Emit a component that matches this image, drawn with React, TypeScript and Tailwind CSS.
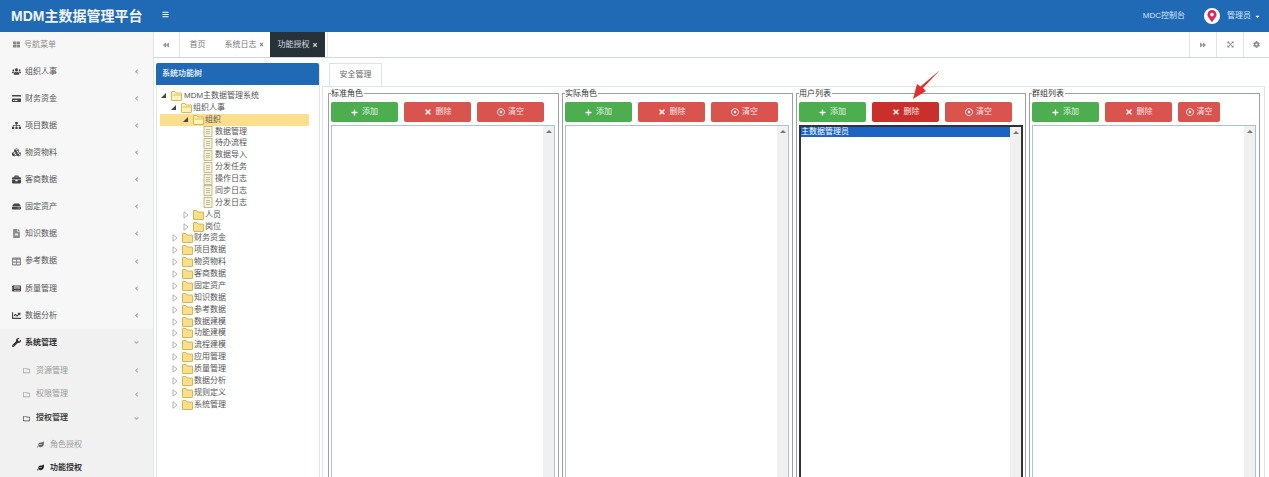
import { ReactNode } from "react"
import {
  FaAngleDown, FaAngleLeft, FaBars, FaBriefcase, FaCaretDown, FaCog, FaCreditCard, FaCubes,
  FaExpandArrowsAlt, FaFileAlt, FaForward, FaBackward, FaHdd, FaLeaf, FaChartLine,
  FaMapMarkerAlt, FaNewspaper, FaPlus, FaSitemap, FaTable, FaThLarge, FaTimes, FaUsers, FaWrench,
  FaRegFolder, FaRegDotCircle,
} from "react-icons/fa"

const sideItems: { label: string; icon: ReactNode; h: string }[] = [
  { label: "组织人事", icon: <FaUsers />, h: "h-[27px]" },
  { label: "财务资金", icon: <FaCreditCard />, h: "h-[27px]" },
  { label: "项目数据", icon: <FaSitemap />, h: "h-[27px]" },
  { label: "物资物料", icon: <FaCubes />, h: "h-[27px]" },
  { label: "客商数据", icon: <FaBriefcase />, h: "h-[27px]" },
  { label: "固定资产", icon: <FaHdd />, h: "h-[27px]" },
  { label: "知识数据", icon: <FaFileAlt className="opacity-60" />, h: "h-[27px]" },
  { label: "参考数据", icon: <FaTable className="opacity-60" />, h: "h-[28px]" },
  { label: "质量管理", icon: <FaNewspaper />, h: "h-[27px]" },
  { label: "数据分析", icon: <FaChartLine />, h: "h-[27px]" },
]

const subFolders = ["数据管理", "待办流程", "数据导入", "分发任务", "操作日志", "同步日志", "分发日志"]
const topFolders = ["财务资金", "项目数据", "物资物料", "客商数据", "固定资产", "知识数据", "参考数据", "数据建模", "功能建模", "流程建模", "应用管理", "质量管理", "数据分析", "规则定义", "系统管理"]

function Folder({ open }: { open?: boolean }) {
  return (
    <svg width="11" height="10" viewBox="0 0 11 10" className="shrink-0">
      <path d="M.5 2V9a.5.5 0 0 0 .5.5h9a.5.5 0 0 0 .5-.5V2.5A.5.5 0 0 0 10 2H5L4 .5H1A.5.5 0 0 0 .5 1z" fill={open ? "#fff3b8" : "#f8e08a"} stroke="#c9a640" strokeWidth="0.8" />
      {open && <path d="M1.5 4h9" stroke="#e2c25a" strokeWidth="1" />}
    </svg>
  )
}

function Doc() {
  return (
    <svg width="10" height="11" viewBox="0 0 10 11" className="shrink-0">
      <rect x="1" y="0.5" width="8" height="10" fill="#f6f3dc" stroke="#b5ad78" strokeWidth="0.8" />
      <path d="M3 3.5h4M3 5.5h4M3 7.5h4" stroke="#a9a27a" strokeWidth="0.7" />
    </svg>
  )
}

function TreeRow({ indent, arrow, children, selected }: { indent: string; arrow?: "open" | "closed"; children: ReactNode; selected?: boolean }) {
  return (
    <div className={`flex h-[11.88px] items-center ${selected ? "bg-[#fbdf8e]" : ""} ${indent}`}>
      <span className="flex w-[11px] shrink-0 items-center pl-[1px]">
        {arrow === "open" && <span className="h-0 w-0 border-b-[5px] border-l-[5px] border-b-[#444] border-l-transparent" />}
        {arrow === "closed" && (
          <svg width="6" height="8" viewBox="0 0 6 8">
            <path d="M1 .8 L5 4 L1 7.2Z" fill="#fff" stroke="#aaa" strokeWidth="0.9" />
          </svg>
        )}
      </span>
      {children}
    </div>
  )
}

function Fieldset({ title, width, last, active, selected }: { title: string; width: string; last?: boolean; active?: boolean; selected?: string }) {
  return (
    <div className={`relative h-[390px] shrink-0 border border-b-0 border-[#9aa0a6] px-[2px] pt-[8px] ${width}`}>
      <span className="absolute -top-[6px] left-[2px] bg-white pr-[1px] text-[8px] leading-[11px] text-[#333]">{title}</span>
      <div className="flex gap-[6px]">
        <button className="flex h-[20px] w-[67px] items-center justify-center gap-[4px] rounded-[2px] bg-[#4cae4f] text-[8px] text-[#e8f5e8]">
          <FaPlus className="text-[7px] text-white" />添加
        </button>
        <button className={`flex h-[20px] w-[67px] items-center justify-center gap-[4px] rounded-[2px] text-[8px] text-[#fbe6e5] ${active ? "bg-[#c9302c]" : "bg-[#d9534f]"}`}>
          <FaTimes className="text-[8px] text-white" />删除
        </button>
        <button className={`flex h-[20px] items-center justify-center gap-[3px] rounded-[2px] bg-[#d9534f] text-[8px] text-[#fbe6e5] ${last ? "w-[42px]" : "w-[67px]"}`}>
          <FaRegDotCircle className="text-[8px] text-white" />清空
        </button>
      </div>
      <div className={`mt-[3px] flex h-[360px] w-[224px] ${active ? "border-2 border-[#333]" : "border border-[#a9c4cc]"}`}>
        <div className="flex-1">
          {selected && <div className="h-[10px] bg-[#1c64c4] text-[8px] leading-[10px] text-white">{selected}</div>}
        </div>
        <div className="flex w-[11px] justify-center bg-[#f0f0f0] pt-[4px]">
          <span className="h-0 w-0 border-x-[3px] border-b-[3px] border-x-transparent border-b-[#777]" />
        </div>
      </div>
    </div>
  )
}

export default function App() {
  return (
    <div className="flex h-[477px] w-[1269px] flex-col overflow-hidden bg-white text-[8px] text-[#555] [font-family:'Liberation_Sans','Noto_Sans_CJK_SC',sans-serif]">
      <header className="flex h-[32px] shrink-0 items-center bg-[#2069b4] text-white">
        <div className="w-[153px] shrink-0 pl-[11px] text-[14px] font-bold text-[#f0f5fa]">MDM主数据管理平台</div>
        <FaBars className="-mt-[3px] ml-[9px] text-[7px]" />
        <div className="ml-auto flex items-center text-[8px] text-[#d5e5f5]">
          <span>MDC控制台</span>
          <span className="ml-[19px] flex h-[16px] w-[16px] items-center justify-center rounded-full bg-white">
            <FaMapMarkerAlt className="text-[12px] text-[#e0245e]" />
          </span>
          <span className="ml-[7px]">管理员</span>
          <FaCaretDown className="ml-[3px] mr-[8px] text-[7px] text-white" />
        </div>
      </header>

      <div className="flex min-h-0 flex-1">
        <aside className="w-[154px] shrink-0 border-r border-[#e4e4e4] bg-[#f7f7f7]">
          <div className="flex h-[26px] items-center gap-[4px] pb-[1px] pl-[13px] text-[#888]">
            <FaThLarge className="text-[7px]" />号航菜单
          </div>
          {sideItems.map((item) => (
            <div key={item.label} className={`flex items-center pl-[12px] pr-[13px] text-[#555] ${item.h}`}>
              <span className="flex w-[13px] text-[9px] text-[#444]">{item.icon}</span>
              {item.label}
              <FaAngleLeft className="ml-auto text-[7px] text-[#aaa]" />
            </div>
          ))}
          <div className="h-[149px] bg-[#f1f1f1]">
            <div className="mb-[3px] flex h-[27px] items-center pl-[12px] pr-[13px] font-bold text-[#333]">
              <FaWrench className="w-[13px] shrink-0 pr-[4px] text-[9px]" />系统管理
              <FaAngleDown className="ml-auto text-[7px] text-[#aaa]" />
            </div>
            <div className="flex h-[23.5px] items-center pl-[23px] pr-[13px] text-[#999]">
              <FaRegFolder className="mr-[6px] text-[7px]" />资源管理
              <FaAngleLeft className="ml-auto text-[7px] text-[#aaa]" />
            </div>
            <div className="flex h-[23.5px] items-center pl-[23px] pr-[13px] text-[#999]">
              <FaRegFolder className="mr-[6px] text-[7px]" />权限管理
              <FaAngleLeft className="ml-auto text-[7px] text-[#aaa]" />
            </div>
            <div className="mb-[3px] flex h-[24px] items-center pl-[23px] pr-[13px] font-bold text-[#444]">
              <FaRegFolder className="mr-[6px] text-[7px]" />授权管理
              <FaAngleDown className="ml-auto text-[7px] text-[#aaa]" />
            </div>
            <div className="flex h-[23px] items-center pl-[37px] text-[#999]">
              <FaLeaf className="mr-[6px] text-[7px] text-[#666]" />角色授权
            </div>
            <div className="flex h-[23px] items-center pl-[37px] font-bold text-[#333]">
              <FaLeaf className="mr-[6px] text-[7px] text-[#222]" />功能授权
            </div>
          </div>
        </aside>

        <main className="flex min-w-0 flex-1 flex-col">
          <div className="flex h-[26px] shrink-0 items-stretch border-b border-[#cfd8df] text-[#777]">
            <div className="flex w-[26px] items-center justify-center border-r border-[#e5e5e5] pr-[2px]"><FaBackward className="text-[6px] text-[#999]" /></div>
            <div className="flex w-[35px] items-center justify-center">首页</div>
            <div className="ml-[4px] flex w-[50px] items-center justify-center gap-[2px]">系统日志<FaTimes className="text-[5px]" /></div>
            <div className="ml-[1px] flex w-[55px] items-center justify-center gap-[2px] bg-[#263238] text-[#d7dde0]">功能授权<FaTimes className="text-[6px]" /></div>
            <div className="ml-[2px] flex-1 border-l border-[#e5e5e5]" />
            <div className="flex w-[27px] items-center justify-center border-l border-[#e5e5e5]"><FaForward className="text-[6px] text-[#999]" /></div>
            <div className="flex w-[27px] items-center justify-center border-l border-[#e5e5e5]"><FaExpandArrowsAlt className="text-[7px] text-[#888]" /></div>
            <div className="flex w-[26px] items-center justify-center border-l border-[#e5e5e5]"><FaCog className="text-[7px] text-[#888]" /></div>
          </div>

          <div className="flex min-h-0 flex-1">
            <section className="ml-[2px] mt-[5px] flex w-[164px] shrink-0 flex-col border-r border-[#dfe5e8]">
              <div className="flex h-[22px] shrink-0 items-center rounded-t-[2px] bg-[#2069b4] pl-[6px] font-bold text-[#dbe8f5]">系统功能树</div>
              <div className="flex-1 border-l border-[#e3e8ea] pt-[5px] text-[#555]">
                <div className="pl-[3px] pr-[10px]">
                  <TreeRow arrow="open" indent="pl-0"><Folder open /><span className="ml-[2px]">MDM主数据管理系统</span></TreeRow>
                  <TreeRow indent="pl-[10px]" arrow="open"><Folder open /><span className="ml-[1px]">组织人事</span></TreeRow>
                  <TreeRow indent="pl-[22px]" arrow="open" selected><Folder open /><span className="ml-[1px]">组织</span></TreeRow>
                  {subFolders.map((name) => (
                    <TreeRow key={name} indent="pl-[32px]"><Doc /><span className="ml-[2px]">{name}</span></TreeRow>
                  ))}
                  <TreeRow indent="pl-[22px]" arrow="closed"><Folder /><span className="ml-[1px]">人员</span></TreeRow>
                  <TreeRow indent="pl-[22px]" arrow="closed"><Folder /><span className="ml-[1px]">岗位</span></TreeRow>
                  {topFolders.map((name) => (
                    <TreeRow key={name} indent="pl-[11px]" arrow="closed"><Folder /><span className="ml-[1px]">{name}</span></TreeRow>
                  ))}
                </div>
              </div>
            </section>

            <section className="relative ml-[2px] mr-[4px] min-w-0 flex-1 pt-[5px]">
              <div className="ml-[7px] flex h-[24px] w-[53px] items-center justify-center border border-[#dfe3e6] border-b-white text-[#666]">安全管理</div>
              <div className="-mt-px flex gap-[3px] border-t border-l border-r border-[#dfe3e6] pl-[5px] pt-[6px]">
                <Fieldset title="标准角色" width="w-[231px]" />
                <Fieldset title="实际角色" width="w-[231px]" />
                <Fieldset title="用户列表" width="w-[230px]" active selected="主数据管理员" />
                <Fieldset title="群组列表" width="w-[231px]" last />
              </div>
              <svg className="absolute left-[590px] top-[12px] h-[30px] w-[30px]" viewBox="0 0 30 30">
                <path d="M28 0 L11 18 L14 21 L1 29 L5 14 L8.5 16.5 Z" fill="#e0302c" />
              </svg>
            </section>
          </div>
        </main>
      </div>
    </div>
  )
}
